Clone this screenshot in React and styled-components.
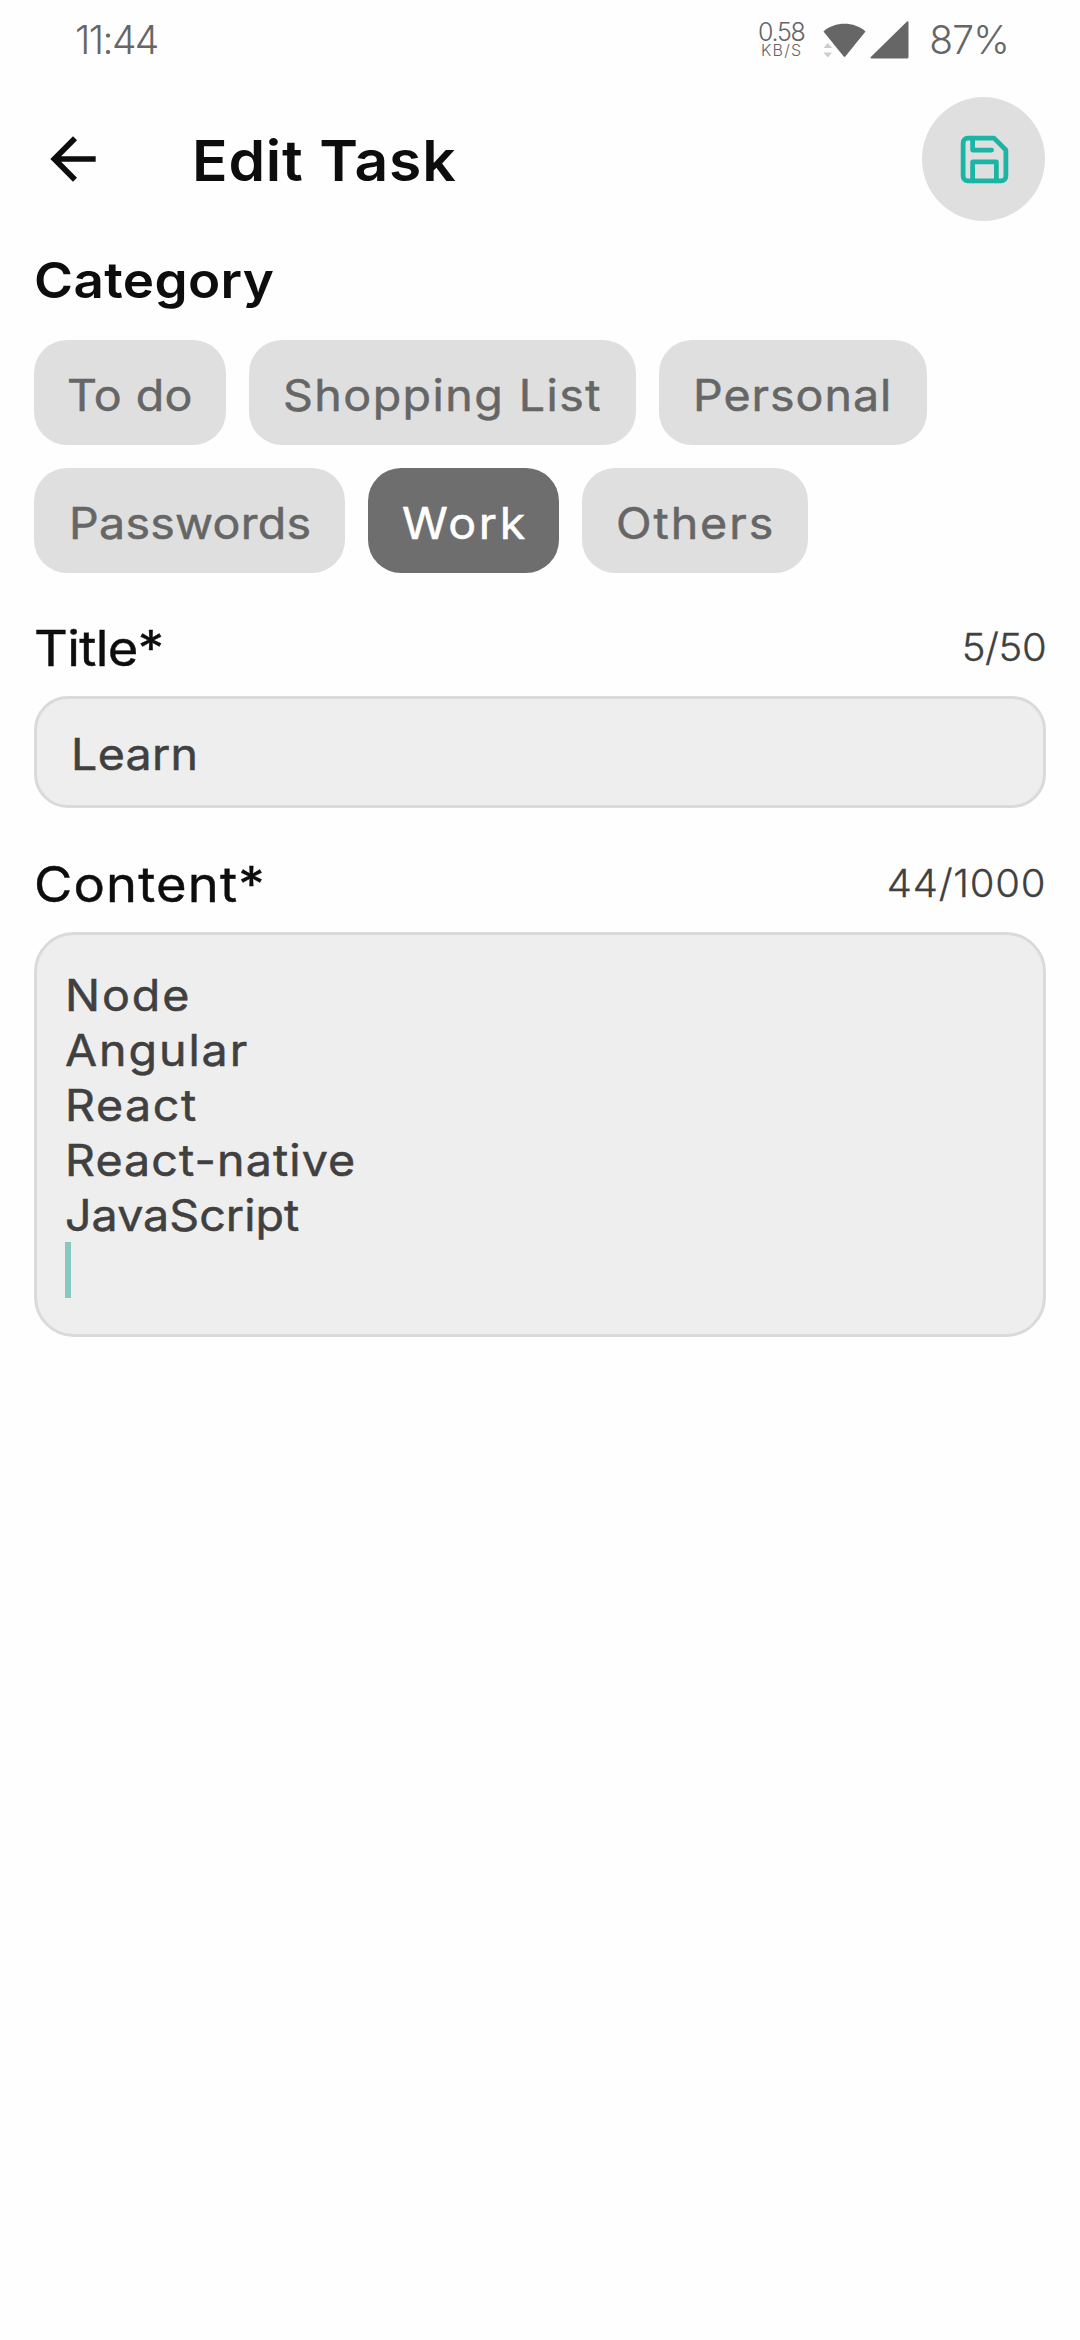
import React from "react";
import styled, { createGlobalStyle } from "styled-components";

const GlobalStyle = createGlobalStyle`
  * { box-sizing: border-box; }
  body {
    margin: 0;
    background: #fefefe;
    font-family: Inter, "Liberation Sans", sans-serif;
    font-kerning: normal;
  }
`;

const Screen = styled.div`
  width: 1080px;
  min-height: 2340px;
  background: #fefefe;
  color: #0c0d0c;
`;

const Wide = styled.span`
  display: inline-block;
  white-space: nowrap;
  transform: scaleX(${(p) => p.$stretch ?? 1.07});
  transform-origin: ${(p) => p.$origin ?? "left"} center;
  letter-spacing: ${(p) => p.$tracking ?? 0}px;
`;

const StatusBar = styled.div`
  height: 80px;
  padding: 0 71px 0 75px;
  display: flex;
  align-items: center;
  color: #666;
  font-weight: 300;
`;

const Clock = styled.span`
  font-size: 39px;
  line-height: 48px;
  letter-spacing: -1.6px;
  margin-right: auto;
`;

const DataRate = styled.div`
  display: flex;
  flex-direction: column;
  align-items: center;
  width: 48px;
  margin-right: 18px;
`;

const RateValue = styled.span`
  font-size: 25px;
  line-height: 20px;
  letter-spacing: -1.25px;
`;

const RateUnit = styled.span`
  font-size: 16px;
  line-height: 17px;
  letter-spacing: 1.2px;
  padding-left: 1px;
`;

const WifiIcon = styled.svg`
  width: 43px;
  height: 38px;
  margin-right: 4px;
`;

const SignalIcon = styled.svg`
  width: 39px;
  height: 38px;
  margin-right: 20px;
`;

const Battery = styled.span`
  font-size: 39px;
  line-height: 48px;
  letter-spacing: -0.8px;
`;

const Header = styled.header`
  height: 158px;
  padding: 0 35px 0 39px;
  display: flex;
  align-items: center;
`;

const BackButton = styled.button`
  border: 0;
  padding: 0;
  background: none;
  color: inherit;
  width: 68px;
  height: 68px;

  svg { display: block; width: 68px; height: 68px; }
`;

const ScreenTitle = styled.h1`
  margin: 0 auto 0 85px;
  padding-top: 4px;
  font-size: 56px;
  line-height: 68px;
  font-weight: 600;
`;

const SaveButton = styled.button`
  border: 0;
  padding: 0 0 0 2px;
  width: 123px;
  height: 124px;
  border-radius: 50%;
  background: #dfdfdf;
  color: #1bb5a5;
  display: grid;
  place-items: center;

  svg { width: 57px; height: 57px; display: block; }
`;

const Form = styled.main`
  padding: 12px 34px 0;
`;

const SectionTitle = styled.h2`
  margin: 0 0 30px;
  font-size: 49.5px;
  line-height: 60px;
  font-weight: 600;
`;

const ChipList = styled.div`
  display: flex;
  flex-wrap: wrap;
  gap: 23px;
`;

const Chip = styled.button`
  border: 0;
  width: ${(p) => p.$width}px;
  height: 105px;
  padding: 5px 0 0 ${(p) => p.$inset}px;
  border-radius: 33px;
  background: ${(p) => (p.$active ? "#6e6e6e" : "#dfdfdf")};
  color: ${(p) => (p.$active ? "#fff" : "#666")};
  font: 400 43.5px/54px Inter, "Liberation Sans", sans-serif;
  -webkit-text-stroke: 0.5px currentColor;
  text-align: left;
`;

const FieldHead = styled.div`
  display: flex;
  justify-content: space-between;
  align-items: flex-start;
  height: 78px;
  margin-top: ${(p) => p.$top}px;
`;

const FieldLabel = styled.label`
  font-size: 49px;
  line-height: 61px;
  font-weight: 400;
  -webkit-text-stroke: 0.4px currentColor;
`;

const Counter = styled.span`
  font-size: 38.5px;
  line-height: 58px;
  font-weight: 300;
  -webkit-text-stroke: 0.3px currentColor;
  color: #404040;
`;

const Field = styled.div`
  border: 3px solid #dadada;
  background: #eee;
  color: #404040;
  font-size: 43.5px;
  line-height: 55.1px;
  font-weight: 400;
  -webkit-text-stroke: 0.5px currentColor;
`;

const TitleField = styled(Field)`
  height: 112px;
  border-radius: 34px;
  padding: 28px 0 0 34px;
`;

const ContentField = styled(Field)`
  height: 405px;
  border-radius: 40px;
  padding: 33px 28px;
`;

const Line = styled.div`
  height: 55.1px;
`;

const Caret = styled.div`
  width: 6px;
  height: 56px;
  margin-top: -1px;
  background: #85c9c2;
`;

const categories = [
  { name: "To do", width: 192, inset: 33, tracking: 0.4 },
  { name: "Shopping List", width: 387, inset: 34, tracking: 1.35 },
  { name: "Personal", width: 268, inset: 34, tracking: 0.9 },
  { name: "Passwords", width: 311, inset: 35, tracking: 0.25 },
  { name: "Work", width: 191, inset: 34, tracking: 2.5 },
  { name: "Others", width: 226, inset: 34, tracking: 1.8 },
];

const lines = [
  { text: "Node", tracking: 1.8 },
  { text: "Angular", tracking: 1.8 },
  { text: "React", tracking: 1.5 },
  { text: "React-native", tracking: 1.05 },
  { text: "JavaScript", tracking: 0.05 },
];

const selected = "Work";

export default function App() {
  return (
    <Screen>
      <GlobalStyle />
      <StatusBar>
        <Clock>11:44</Clock>
        <DataRate>
          <RateValue>0.58</RateValue>
          <RateUnit>KB/S</RateUnit>
        </DataRate>
        <WifiIcon viewBox="0 0 43 38">
          <path d="M.5 10.5C12 .3 31 .3 42.500 10.500L22.300 35.500Q21.500 36.400 20.700 35.500Z" fill="#666" />
          <path d="M-1 28L4.500 21L11 28L11 34L-1 34Z" fill="#fefefe" />
          <path d="M0.500 27L4.800 22L9.100 27ZM0.500 31.500H9.100L4.800 36.500Z" fill="#ccc" />
        </WifiIcon>
        <SignalIcon viewBox="0 0 39 38">
          <path d="M37 .4Q38.500 -.2 38.500 1.500V36Q38.500 37.500 37 37.500H1.500Q0 37.300 .8 36Z" fill="#666" />
        </SignalIcon>
        <Battery>87%</Battery>
      </StatusBar>

      <Header>
        <BackButton aria-label="Back">
          <svg viewBox="0 0 24 24" fill="currentColor">
            <path d="M20 11H7.830l5.590-5.590L12 4l-8 8 8 8 1.410-1.410L7.830 13H20v-2z" />
          </svg>
        </BackButton>
        <ScreenTitle>
          <Wide $stretch={1.05} $tracking={0.75}>Edit Task</Wide>
        </ScreenTitle>
        <SaveButton aria-label="Save">
          <svg viewBox="0 0 24 24" fill="none" stroke="currentColor" strokeWidth="2" strokeLinecap="round" strokeLinejoin="round">
            <path d="M19 21H5a2 2 0 0 1-2-2V5a2 2 0 0 1 2-2h11l5 5v11a2 2 0 0 1-2 2z" />
            <polyline points="17 21 17 13 7 13 7 21" />
            <polyline points="7 3 7 8 15 8" />
          </svg>
        </SaveButton>
      </Header>

      <Form>
        <SectionTitle>
          <Wide $tracking={0.35}>Category</Wide>
        </SectionTitle>
        <ChipList>
          {categories.map((c) => (
            <Chip key={c.name} $width={c.width} $inset={c.inset} $active={c.name === selected}>
              <Wide $tracking={c.tracking}>{c.name}</Wide>
            </Chip>
          ))}
        </ChipList>

        <FieldHead $top={45}>
          <FieldLabel><Wide $tracking={-0.6}>Title*</Wide></FieldLabel>
          <Counter><Wide $stretch={1.04} $origin="right" $tracking={-0.4}>5/50</Wide></Counter>
        </FieldHead>
        <TitleField><Wide $tracking={0.3}>Learn</Wide></TitleField>

        <FieldHead $top={46}>
          <FieldLabel><Wide $tracking={1.1}>Content*</Wide></FieldLabel>
          <Counter><Wide $stretch={1.04} $origin="right" $tracking={0.7}>44/1000</Wide></Counter>
        </FieldHead>
        <ContentField>
          {lines.map((l) => (
            <Line key={l.text}><Wide $tracking={l.tracking}>{l.text}</Wide></Line>
          ))}
          <Caret />
        </ContentField>
      </Form>
    </Screen>
  );
}
